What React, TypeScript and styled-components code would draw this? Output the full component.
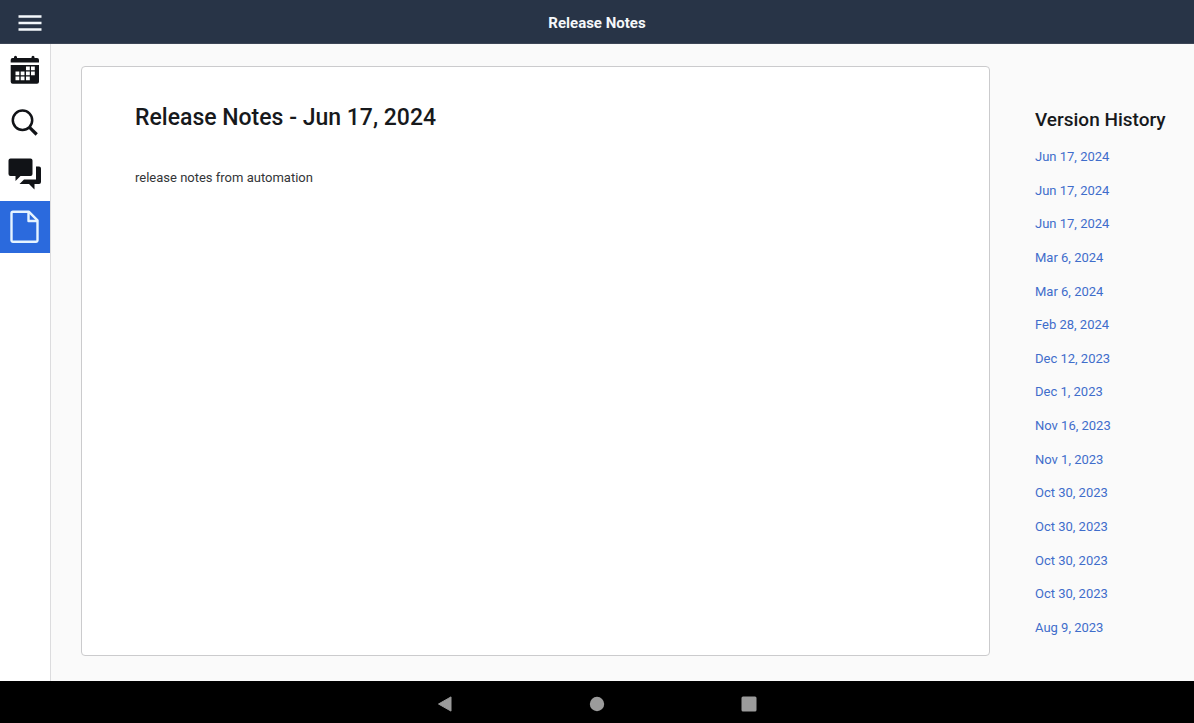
import React from "react";
import styled, { createGlobalStyle } from "styled-components";

const GlobalStyle = createGlobalStyle`
  *, *::before, *::after { box-sizing: border-box; }
  body { margin: 0; background: #fff; font-family: Roboto, "Liberation Sans", sans-serif; color: #17191c; }
`;

const Screen = styled.div`
  display: flex;
  flex-direction: column;
  min-height: 100vh;
`;

const TopBar = styled.header`
  display: grid;
  grid-template-columns: 60px 1fr 60px;
  align-items: center;
  height: 44px;
  padding-top: 3px;
  background: #283447;
  border-bottom: 1px solid #3c4556;
`;

const IconButton = styled.button`
  display: flex;
  align-items: center;
  justify-content: center;
  height: 40px;
  padding: 0;
  border: 0;
  background: none;
  cursor: pointer;
`;

const BarTitle = styled.h1`
  margin: 0;
  color: #f5f7fa;
  font-size: 15px;
  line-height: 20px;
  font-weight: 700;
  text-align: center;
`;

const Body = styled.div`
  display: flex;
  flex: 1;
`;

const SideNav = styled.nav`
  display: flex;
  flex-direction: column;
  flex: none;
  width: 51px;
  padding-top: 1px;
  background: #fff;
  border-right: 1px solid #dcdcde;
`;

const NavButton = styled.button<{ $active?: boolean }>`
  display: block;
  height: 52px;
  padding: 0;
  border: 0;
  background: ${(p) => (p.$active ? "#2b6add" : "transparent")};
  color: ${(p) => (p.$active ? "#e6f4ff" : "#111317")};
  cursor: pointer;

  svg { display: block; }
`;

const Content = styled.main`
  display: flex;
  flex: 1;
  gap: 45px;
  padding: 22px 0 25px 30px;
  background: #fafafa;
`;

const NoteCard = styled.article`
  flex: 1;
  padding: 37px 53px;
  background: #fff;
  border: 1px solid #cbcbcd;
  border-radius: 4px;
`;

const NoteTitle = styled.h2`
  margin: 0 0 36px;
  font-size: 23px;
  line-height: 28px;
  font-weight: 500;
`;

const NoteText = styled.p`
  margin: 0;
  color: #333537;
  font-size: 13px;
  line-height: 20px;
`;

const History = styled.aside`
  display: flex;
  flex-direction: column;
  flex: none;
  width: 159px;
  padding: 42px 0 18px;
`;

const HistoryTitle = styled.h2`
  margin: 0 0 15px;
  font-size: 19px;
  line-height: 24px;
  font-weight: 500;
`;

const VersionList = styled.ul`
  display: flex;
  flex-direction: column;
  justify-content: space-between;
  flex: 1;
  margin: 0;
  padding: 0;
  list-style: none;
`;

const VersionLink = styled.a`
  display: block;
  color: #3f6dcb;
  font-size: 13px;
  line-height: 20px;
  text-decoration: none;
`;

const SystemBar = styled.footer`
  display: flex;
  align-items: center;
  justify-content: center;
  gap: 112px;
  height: 42px;
  padding-top: 4px;
  background: #000;
`;

const SystemButton = styled(IconButton)`
  width: 40px;
  height: 38px;
`;

const versions = [
  "Jun 17, 2024", "Jun 17, 2024", "Jun 17, 2024", "Mar 6, 2024", "Mar 6, 2024",
  "Feb 28, 2024", "Dec 12, 2023", "Dec 1, 2023", "Nov 16, 2023", "Nov 1, 2023",
  "Oct 30, 2023", "Oct 30, 2023", "Oct 30, 2023", "Oct 30, 2023", "Aug 9, 2023",
];

const MenuIcon = () => (
  <svg width="24" height="18" viewBox="0 0 24 18" aria-hidden="true">
    <path d="M0.5 2.5h23M0.5 9h23M0.5 15.5h23" stroke="#f3f7fc" strokeWidth="2.6" />
  </svg>
);

const CalendarIcon = () => (
  <svg width="50" height="52" viewBox="0 0 50 52" fill="currentColor" aria-hidden="true">
    <path d="M12.5 13H14v-.8a1.5 1.5 0 0 1 3 0v.8h14.500v-.8a1.500 1.500 0 0 1 3 0v.8H37a2 2 0 0 1 2 2v2.600H10.700V15a2 2 0 0 1 1.800-2z" />
    <path fillRule="evenodd" d="M10.700 20H39V36.800a2 2 0 0 1-2 2H12.700a2 2 0 0 1-2-2zM26 21.500v3.800h3.800v-3.800zM31 21.500v3.800h3.800v-3.800zM15.500 26.500v3.800h3.800v-3.800zM20.700 26.500v3.800h3.800v-3.800zM26 26.500v3.800h3.800v-3.800zM31 26.500v3.800h3.800v-3.800zM15.500 31.500v3.800h3.800v-3.800zM20.700 31.500v3.800h3.800v-3.800zM26 31.500v3.800h3.800v-3.800z" />
  </svg>
);

const SearchIcon = () => (
  <svg width="50" height="52" viewBox="0 0 50 52" fill="none" stroke="currentColor" aria-hidden="true">
    <circle cx="22.500" cy="23.300" r="9.700" strokeWidth="2.500" />
    <path d="M29.500 30.300L36.700 37.500" strokeWidth="3.200" />
  </svg>
);

const ChatIcon = () => (
  <svg width="50" height="52" viewBox="0 0 50 52" fill="currentColor" aria-hidden="true">
    <path d="M10.500 9.500H30.500a2 2 0 0 1 2 2V25a2 2 0 0 1-2 2H20.500L15.500 32V27H10.500a2 2 0 0 1-2-2V11.500a2 2 0 0 1 2-2z" />
    <path d="M36 17.500H39a2 2 0 0 1 2 2V33a2 2 0 0 1-2 2H34.500V40.500L29 35H19.500L24 30.500H36z" />
  </svg>
);

const FileIcon = () => (
  <svg width="50" height="52" viewBox="0 0 50 52" fill="none" stroke="currentColor" strokeWidth="2.400" strokeLinejoin="round" aria-hidden="true">
    <path d="M13 10.800H29L37.500 19.300V39.300a1.500 1.500 0 0 1-1.500 1.500H13a1.500 1.500 0 0 1-1.500-1.500V12.300A1.500 1.500 0 0 1 13 10.800z" />
    <path d="M28.500 11V20H37.500" />
  </svg>
);

export default function App() {
  return (
    <Screen>
      <GlobalStyle />
      <TopBar>
        <IconButton aria-label="Menu"><MenuIcon /></IconButton>
        <BarTitle>Release Notes</BarTitle>
      </TopBar>
      <Body>
        <SideNav aria-label="Main">
          <NavButton aria-label="Calendar"><CalendarIcon /></NavButton>
          <NavButton aria-label="Search"><SearchIcon /></NavButton>
          <NavButton aria-label="Messages"><ChatIcon /></NavButton>
          <NavButton aria-label="Release notes" aria-current="page" $active><FileIcon /></NavButton>
        </SideNav>
        <Content>
          <NoteCard>
            <NoteTitle>Release Notes - Jun 17, 2024</NoteTitle>
            <NoteText>release notes from automation</NoteText>
          </NoteCard>
          <History>
            <HistoryTitle>Version History</HistoryTitle>
            <VersionList>
              {versions.map((date, index) => (
                <li key={index}><VersionLink href="#">{date}</VersionLink></li>
              ))}
            </VersionList>
          </History>
        </Content>
      </Body>
      <SystemBar>
        <SystemButton aria-label="Back">
          <svg width="16" height="18" viewBox="0 0 16 18" aria-hidden="true"><path d="M1.500 9L14 1.900V16.100z" fill="#9b9b9b" stroke="#9b9b9b" strokeLinejoin="round" /></svg>
        </SystemButton>
        <SystemButton aria-label="Home">
          <svg width="16" height="16" viewBox="0 0 16 16" aria-hidden="true"><circle cx="8" cy="8" r="7.200" fill="#9b9b9b" /></svg>
        </SystemButton>
        <SystemButton aria-label="Overview">
          <svg width="16" height="16" viewBox="0 0 16 16" aria-hidden="true"><rect x="0.500" y="0.500" width="15" height="15" rx="1.500" fill="#9b9b9b" /></svg>
        </SystemButton>
      </SystemBar>
    </Screen>
  );
}
